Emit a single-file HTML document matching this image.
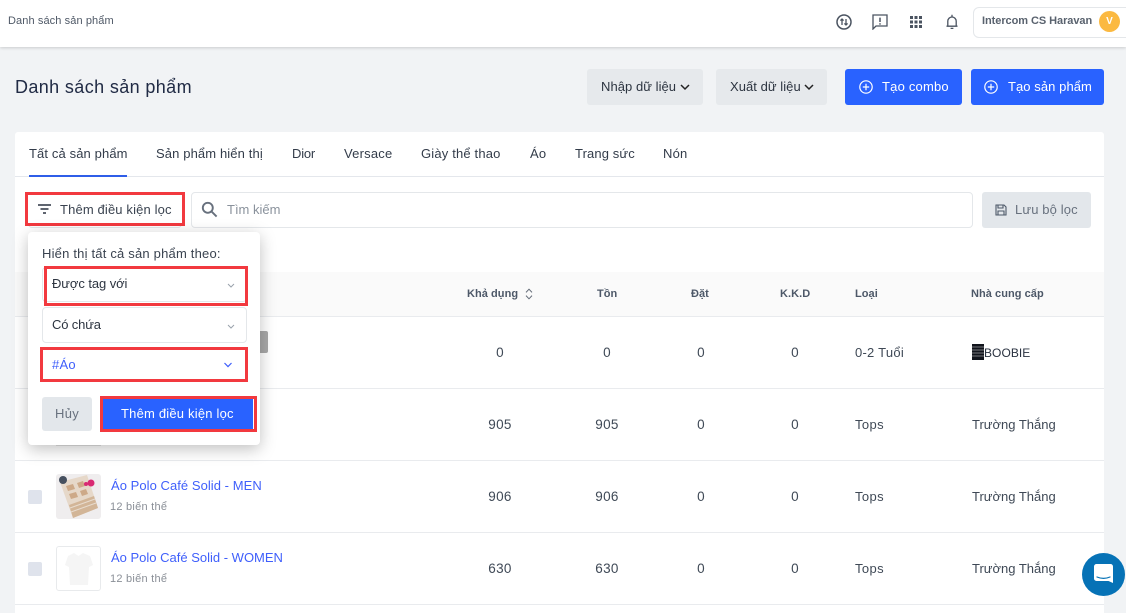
<!DOCTYPE html>
<html lang="vi">
<head>
<meta charset="utf-8">
<title>Danh sách sản phẩm</title>
<style>
html,body{margin:0;padding:0}
body{width:1126px;height:613px;overflow:hidden;position:relative;background:#f1f3f5;font-family:"Liberation Sans","Noto Sans CJK SC",sans-serif;font-size:13px;color:#212b36}
.t{position:absolute;white-space:nowrap;line-height:16px;letter-spacing:.38px}
.box{position:absolute;box-sizing:border-box}
.red{position:absolute;box-sizing:border-box;border:3px solid #f2393f}
.hd{font-weight:bold;font-size:11px;color:#4d5868;letter-spacing:.05px}
.c{color:#3f4956;text-align:center;width:60px;font-size:13.5px;letter-spacing:.3px}
.v{color:#3f4956}
.ts{letter-spacing:0}
.lnk{color:#3f5ffb}
.sub{color:#8a8f97;font-size:11px}
.tab{color:#333c4a;top:146px;letter-spacing:.12px}
.line{position:absolute;left:15px;width:1089px;height:1px;background:#e9ebee}
.cb{position:absolute;left:28px;width:14px;height:14px;background:#dfe3ec;border-radius:2px}
svg{position:absolute;display:block}
</style>
</head>
<body>
<!-- top bar -->
<div class="box" style="left:0;top:0;width:1126px;height:47px;background:#fff;box-shadow:0 1px 3px rgba(0,0,0,.16)"></div>
<div class="t" style="left:8px;top:13px;font-size:11px;color:#4e5866;letter-spacing:.1px">Danh sách sản phẩm</div>

<svg style="left:836px;top:14px" width="16" height="16" viewBox="0 0 16 16" fill="none" stroke="#4a5360" stroke-width="1.500"><circle cx="8" cy="8" r="7"/><path d="M6 11V5M4.400 6.600 6 5l1.600 1.600M10 5v6M8.400 9.400 10 11l1.600-1.600" stroke-width="1.300"/></svg>
<svg style="left:872px;top:14px" width="16" height="16" viewBox="0 0 16 16" fill="none" stroke="#4a5360" stroke-width="1.300"><path d="M1 1h14v11H4l-3 3z"/><path d="M8 3.600v4.400M8 9.200v1.400" stroke-width="1.500"/></svg>
<svg style="left:909px;top:15px" width="14" height="14" viewBox="0 0 14 14" fill="#4a5360"><rect x="1" y="1" width="3" height="3"/><rect x="5.500" y="1" width="3" height="3"/><rect x="10" y="1" width="3" height="3"/><rect x="1" y="5.500" width="3" height="3"/><rect x="5.500" y="5.500" width="3" height="3"/><rect x="10" y="5.500" width="3" height="3"/><rect x="1" y="10" width="3" height="3"/><rect x="5.500" y="10" width="3" height="3"/><rect x="10" y="10" width="3" height="3"/></svg>
<svg style="left:945px;top:14px" width="14" height="16" viewBox="0 0 14 16" fill="none" stroke="#4a5360" stroke-width="1.300"><path d="M1.500 12.200h11M2.800 12V7.200a4.200 4.200 0 0 1 8.400 0V12"/><path d="M7 .8v2M5.600 14.400h2.800"/></svg>

<div class="box" style="left:973px;top:7px;width:160px;height:31px;background:#fff;border:1px solid #e4e7ea;border-radius:6px"></div>
<div class="t" style="left:982px;top:13px;font-size:11px;font-weight:bold;color:#59626e;letter-spacing:-.06px">Intercom CS Haravan</div>
<div class="box" style="left:1099px;top:11px;width:21px;height:21px;border-radius:50%;background:#fbb941;color:#fff;font-size:10px;font-weight:bold;text-align:center;line-height:21px">V</div>

<!-- title row -->
<div class="t" style="left:15px;top:76px;font-size:18px;line-height:22px;color:#212b45;letter-spacing:.38px">Danh sách sản phẩm</div>

<div class="box" style="left:587px;top:69px;width:116px;height:36px;background:#e6e9ec;border-radius:3px"></div>
<div class="t" style="left:601px;top:79px;color:#2c3440;letter-spacing:.05px">Nhập dữ liệu</div>
<svg style="left:680px;top:84px" width="10" height="7" viewBox="0 0 10 7" fill="none" stroke="#222" stroke-width="1.500"><path d="M1 1l4 4 4-4"/></svg>
<div class="box" style="left:716px;top:69px;width:111px;height:36px;background:#e6e9ec;border-radius:3px"></div>
<div class="t" style="left:730px;top:79px;color:#2c3440;letter-spacing:.05px">Xuất dữ liệu</div>
<svg style="left:804px;top:84px" width="10" height="7" viewBox="0 0 10 7" fill="none" stroke="#222" stroke-width="1.500"><path d="M1 1l4 4 4-4"/></svg>

<div class="box" style="left:845px;top:69px;width:117px;height:36px;background:#2962ff;border-radius:3px"></div>
<svg style="left:859px;top:80px" width="14" height="14" viewBox="0 0 14 14" fill="none" stroke="#fff" stroke-width="1.200"><circle cx="7" cy="7" r="6.200"/><path d="M7 3.800v6.400M3.800 7h6.400"/></svg>
<div class="t" style="left:882px;top:79px;color:#fff;letter-spacing:.2px">Tạo combo</div>
<div class="box" style="left:971px;top:69px;width:133px;height:36px;background:#2962ff;border-radius:3px"></div>
<svg style="left:984px;top:80px" width="14" height="14" viewBox="0 0 14 14" fill="none" stroke="#fff" stroke-width="1.200"><circle cx="7" cy="7" r="6.200"/><path d="M7 3.800v6.400M3.800 7h6.400"/></svg>
<div class="t" style="left:1008px;top:79px;color:#fff;letter-spacing:.07px">Tạo sản phẩm</div>

<!-- card -->
<div class="box" style="left:15px;top:132px;width:1089px;height:481px;background:#fff;border-radius:3px 3px 0 0"></div>

<!-- tabs -->
<div class="t tab" style="left:29px">Tất cả sản phẩm</div>
<div class="t tab" style="left:156px">Sản phẩm hiển thị</div>
<div class="t tab" style="left:292px;letter-spacing:-.2px">Dior</div>
<div class="t tab" style="left:344px;letter-spacing:.2px">Versace</div>
<div class="t tab" style="left:421px;letter-spacing:.17px">Giày thể thao</div>
<div class="t tab" style="left:530px;letter-spacing:.2px">Áo</div>
<div class="t tab" style="left:575px">Trang sức</div>
<div class="t tab" style="left:663px;letter-spacing:.2px">Nón</div>
<div class="box" style="left:15px;top:176px;width:1089px;height:1px;background:#e4e7ec"></div>
<div class="box" style="left:29px;top:175px;width:98px;height:2px;background:#2f5ee8"></div>

<!-- filter row -->
<div class="box" style="left:191px;top:192px;width:782px;height:36px;background:#fff;border:1px solid #e4e7ea;border-radius:4px"></div>
<svg style="left:201px;top:201px" width="17" height="17" viewBox="0 0 17 17" fill="none" stroke="#67707d" stroke-width="1.900"><circle cx="6.800" cy="6.800" r="5"/><path d="M10.600 10.600l5 5"/></svg>
<div class="t" style="left:227px;top:202px;color:#8a929c;letter-spacing:0">Tìm kiếm</div>
<div class="box" style="left:982px;top:192px;width:109px;height:36px;background:#e3e7eb;border-radius:3px"></div>
<svg style="left:995px;top:204px" width="12" height="12" viewBox="0 0 12 12" fill="none" stroke="#4d5868" stroke-width="1.100"><path d="M1 1h8l2 2v8H1zM3 1v3h5V1M3 11V7h6v4"/></svg>
<div class="t" style="left:1015px;top:202px;color:#68717e;letter-spacing:.13px">Lưu bộ lọc</div>

<div class="box" style="left:28px;top:222px;width:154px;height:6px;border:1px solid #e4e7ea;border-top:0;border-radius:0 0 4px 4px"></div>
<div class="red" style="left:25px;top:192px;width:160px;height:34px;background:#fff"></div>
<svg style="left:38px;top:204px" width="13" height="10" viewBox="0 0 13 10" fill="none" stroke="#2a3240" stroke-width="1.400"><path d="M0 1h13M2.500 5h8M5 9h3"/></svg>
<div class="t" style="left:60px;top:202px;color:#3a4350;letter-spacing:.14px">Thêm điều kiện lọc</div>

<!-- table header -->
<div class="box" style="left:15px;top:272px;width:1089px;height:44px;background:#fafafa"></div>
<div class="box" style="left:15px;top:316px;width:1089px;height:1px;background:#e9ebee"></div>
<div class="t hd" style="left:467px;top:286px">Khả dụng</div>
<svg style="left:525px;top:288px" width="8" height="12" viewBox="0 0 8 12" fill="none" stroke="#646c78" stroke-width="1"><path d="M1 4.400 4 1.200l3 3.200M1 7.600l3 3.200 3-3.200"/></svg>
<div class="t hd" style="left:597px;top:286px">Tồn</div>
<div class="t hd" style="left:691px;top:286px">Đặt</div>
<div class="t hd" style="left:780px;top:286px">K.K.D</div>
<div class="t hd" style="left:855px;top:286px">Loại</div>
<div class="t hd" style="left:971px;top:286px">Nhà cung cấp</div>

<!-- row 1 -->
<div class="box" style="left:230px;top:331px;width:38px;height:22px;background:#a8a8a8;border-radius:2px"></div>
<div class="t c" style="left:470px;top:345px">0</div>
<div class="t c" style="left:577px;top:345px">0</div>
<div class="t c" style="left:671px;top:345px">0</div>
<div class="t c" style="left:765px;top:345px">0</div>
<div class="t v" style="left:855px;top:345px;letter-spacing:.25px">0-2 Tuổi</div>
<svg style="left:972px;top:344px" width="12" height="16" viewBox="0 0 12 16"><rect width="12" height="16" fill="#11141c"/><path d="M0 3h12M0 6h12M0 9h12M0 12h12" stroke="#9a9a9a" stroke-width=".8"/></svg>
<div class="t" style="left:984px;top:345px;font-size:12px;color:#2a3240;letter-spacing:.05px">BOOBIE</div>
<div class="line" style="top:388px"></div>

<!-- row 2 -->
<div class="box" style="left:56px;top:430px;width:45px;height:16px;background:#e2e1e3"></div>
<div class="t c" style="left:470px;top:417px">905</div>
<div class="t c" style="left:577px;top:417px">905</div>
<div class="t c" style="left:671px;top:417px">0</div>
<div class="t c" style="left:765px;top:417px">0</div>
<div class="t v" style="left:855px;top:417px">Tops</div>
<div class="t v ts" style="left:972px;top:417px">Trường Thắng</div>
<div class="line" style="top:460px"></div>

<!-- row 3 -->
<div class="cb" style="top:490px"></div>
<div class="box" style="left:56px;top:474px;width:45px;height:45px;background:#efedee;border-radius:3px"></div>
<svg style="left:56px;top:474px" width="45" height="45" viewBox="0 0 45 45"><path d="M4 8 31 1l11 33-25 10z" fill="#e6d8c9"/><path d="M13 31 38 22l4 12-25 10z" fill="#d2b597"/><path d="M14 34 39 25M15 38 40 29" stroke="#e8dccf" stroke-width="1"/><path d="M10 12l7-2 2 5-7 2zM21 9l6-2 2 5-6 2zM13 20l7-2 2 5-7 2zM24 17l6-2 2 5-6 2z" fill="#cda988"/><circle cx="7" cy="6" r="4" fill="#46505f"/><circle cx="35" cy="9" r="3.500" fill="#d92a73"/><circle cx="30" cy="10" r="2" fill="#d92a73"/></svg>
<div class="t lnk ts" style="left:111px;top:478px;letter-spacing:.05px">Áo Polo Café Solid - MEN</div>
<div class="t sub" style="left:110px;top:499px;letter-spacing:.25px">12 biến thể</div>
<div class="t c" style="left:470px;top:489px">906</div>
<div class="t c" style="left:577px;top:489px">906</div>
<div class="t c" style="left:671px;top:489px">0</div>
<div class="t c" style="left:765px;top:489px">0</div>
<div class="t v" style="left:855px;top:489px">Tops</div>
<div class="t v ts" style="left:972px;top:489px">Trường Thắng</div>
<div class="line" style="top:532px"></div>

<!-- row 4 -->
<div class="cb" style="top:562px"></div>
<div class="box" style="left:56px;top:546px;width:45px;height:45px;background:#fff;border:1px solid #e8eaec;border-radius:3px"></div>
<svg style="left:56px;top:546px" width="45" height="45" viewBox="0 0 45 45"><path d="M18 7l4.500 3L27 7l7 3 3 9-4 2-1 18H14l-1-18-4-2 3-9z" fill="#f5f5f5"/></svg>
<div class="t lnk ts" style="left:111px;top:550px">Áo Polo Café Solid - WOMEN</div>
<div class="t sub" style="left:110px;top:571px;letter-spacing:.25px">12 biến thể</div>
<div class="t c" style="left:470px;top:561px">630</div>
<div class="t c" style="left:577px;top:561px">630</div>
<div class="t c" style="left:671px;top:561px">0</div>
<div class="t c" style="left:765px;top:561px">0</div>
<div class="t v" style="left:855px;top:561px">Tops</div>
<div class="t v ts" style="left:972px;top:561px">Trường Thắng</div>
<div class="line" style="top:604px"></div>

<!-- popover -->
<div class="box" style="left:28px;top:232px;width:232px;height:213px;background:#fff;border-radius:4px;box-shadow:0 4px 16px rgba(0,0,0,.25)"></div>
<div class="t" style="left:42px;top:246px;color:#3a4350;letter-spacing:.2px">Hiển thị tất cả sản phẩm theo:</div>

<div class="box" style="left:42px;top:267px;width:205px;height:35px;background:#fff;border:1px solid #e4e7ea;border-radius:4px"></div>
<div class="red" style="left:44px;top:266px;width:204px;height:40px"></div>
<div class="t" style="left:52px;top:276px;color:#2c3440;letter-spacing:-.08px">Được tag với</div>
<svg style="left:227px;top:283px" width="8" height="5" viewBox="0 0 8 5" fill="none" stroke="#9aa2ac" stroke-width="1"><path d="M1 1l3 3 3-3"/></svg>

<div class="box" style="left:42px;top:307px;width:205px;height:36px;background:#fff;border:1px solid #e4e7ea;border-radius:4px"></div>
<div class="t" style="left:52px;top:317px;color:#2c3440;letter-spacing:-.15px">Có chứa</div>
<svg style="left:227px;top:324px" width="8" height="5" viewBox="0 0 8 5" fill="none" stroke="#9aa2ac" stroke-width="1"><path d="M1 1l3 3 3-3"/></svg>

<div class="red" style="left:40px;top:347px;width:208px;height:35px;background:#fff"></div>
<div class="t lnk" style="left:52px;top:357px;letter-spacing:.25px">#Áo</div>
<svg style="left:223px;top:362px" width="10" height="6" viewBox="0 0 10 6" fill="none" stroke="#3f5ffb" stroke-width="1.200"><path d="M1.500 1 5 4.600 8.500 1"/></svg>

<div class="box" style="left:42px;top:397px;width:50px;height:34px;background:#e3e7eb;border-radius:3px"></div>
<div class="t" style="left:55px;top:406px;color:#68717e;letter-spacing:.3px">Hủy</div>
<div class="red" style="left:100px;top:396px;width:157px;height:36px;background:#2962ff"></div>
<div class="box" style="left:253px;top:399px;width:1px;height:30px;background:#fff"></div>
<div class="t" style="left:121px;top:406px;color:#fff;letter-spacing:.2px">Thêm điều kiện lọc</div>

<!-- chat bubble -->
<div class="box" style="left:1082px;top:553px;width:43px;height:43px;border-radius:50%;background:#0672b6"></div>
<svg style="left:1094px;top:564px" width="19" height="19" viewBox="0 0 19 19"><path d="M2.500 0h14A2.500 2.500 0 0 1 19 2.500V19l-4.500-2H2.500A2.500 2.500 0 0 1 0 14.500v-12A2.500 2.500 0 0 1 2.500 0z" fill="#fff"/><path d="M3 13q6.500 2.800 13 0" fill="none" stroke="#0672b6" stroke-width="1.200" stroke-linecap="round"/></svg>
</body>
</html>
